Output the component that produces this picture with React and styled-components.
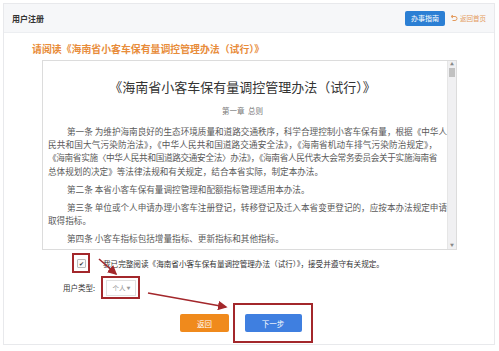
import React, { useState } from 'react'
import styled, { createGlobalStyle } from 'styled-components'

const GlobalStyle = createGlobalStyle`
  html, body {
    margin: 0;
    padding: 0;
    background: #fff;
    font-family: "Noto Sans CJK SC", "Noto Sans", sans-serif;
  }
`

const Panel = styled.div`
  position: relative;
  margin: 3px 0 0 3px;
  width: 490px;
  height: 340px;
  border: 1px solid #e8e9ec;
  box-sizing: content-box;
`

const Header = styled.div`
  height: 28px;
  background: #f6f7f9;
  border-bottom: 1px solid #eceef1;
  display: flex;
  align-items: center;
  justify-content: space-between;
  padding: 0 8px 0 8px;
`

const HeaderTitle = styled.div`
  font-size: 8px;
  font-weight: 700;
  color: #333;
`

const HeaderActions = styled.div`
  display: flex;
  align-items: center;
  gap: 5px;
`

const GuideButton = styled.div`
  width: 40px;
  height: 15px;
  background: #2b7fd4;
  border-radius: 2px;
  color: #fff;
  font-size: 7px;
  display: flex;
  align-items: center;
  justify-content: center;
`

const HomeLink = styled.div`
  display: flex;
  align-items: center;
  gap: 2px;
  color: #e49a5c;
  font-size: 6.5px;
`

const NoticeTitle = styled.div`
  margin: 9px 0 0 28px;
  height: 14px;
  line-height: 14px;
  font-size: 9.9px;
  font-weight: 700;
  color: #e88c3a;
`

const DocBox = styled.div`
  margin: 4px 0 0 38px;
  width: 413px;
  height: 188px;
  border: 1px solid #dcdcdc;
  display: flex;
  overflow: hidden;
`

const DocContent = styled.div`
  flex: 1;
  min-width: 0;
  padding: 0 10px 0 5px;
  color: #5a5a5a;
  overflow: hidden;
`

const DocTitle = styled.div`
  margin-top: 17px;
  text-align: center;
  font-size: 13px;
  line-height: 18px;
  color: #333;
`

const Chapter = styled.div`
  margin-top: 9px;
  text-align: center;
  font-size: 7.5px;
  line-height: 12px;
  color: #777;
`

const Para = styled.div`
  margin-top: ${p => (p.$first ? '8px' : '5px')};
`

const Line = styled.div`
  font-size: 8.6px;
  line-height: 13.2px;
  white-space: nowrap;
  text-align: ${p => (p.$last ? 'left' : 'justify')};
  text-align-last: ${p => (p.$last ? 'left' : 'justify')};
  padding-left: ${p => (p.$indent ? '19px' : '0')};
  letter-spacing: ${p => p.$ls || 0}px;
`

const ScrollTrack = styled.div`
  width: 8px;
  background: #f0f0f2;
  border-left: 1px solid #e6e6e6;
  display: flex;
  flex-direction: column;
  align-items: center;
`

const ScrollArrow = styled.div`
  height: 7px;
  font-size: 4px;
  line-height: 7px;
  color: #888;
`

const ScrollThumb = styled.div`
  width: 6px;
  height: 9px;
  background: #c1c1c1;
`

const ScrollFill = styled.div`
  flex: 1;
`

const Row = styled.div`
  display: flex;
  align-items: center;
  margin: ${p => p.$mt || 3}px 0 0 ${p => p.$ml || 0}px;
`

const Highlight = styled.div`
  border: 2px solid #a3272b;
  box-sizing: border-box;
  display: flex;
  align-items: center;
  justify-content: center;
  width: ${p => p.$w}px;
  height: ${p => p.$h}px;
`

const CheckBox = styled.div`
  width: 7px;
  height: 7px;
  border: 1px solid #bbb;
  border-radius: 1px;
  background: #fafafa;
  display: flex;
  align-items: center;
  justify-content: center;
  font-size: 6px;
  line-height: 7px;
  color: #333;
`

const AgreeText = styled.div`
  margin-left: 13px;
  font-size: 7.6px;
  color: #333;
`

const TypeLabel = styled.div`
  font-size: 7.5px;
  color: #333;
  width: 38px;
`

const SelectBox = styled.div`
  width: 30px;
  height: 16px;
  border: 1px solid #e0e0e0;
  display: flex;
  align-items: center;
  justify-content: space-between;
  padding: 0 4px 0 6px;
  box-sizing: border-box;
  font-size: 6.5px;
  color: #999;
`

const Caret = styled.span`
  font-size: 4px;
`

const ActionButton = styled.div`
  width: ${p => p.$w}px;
  height: 18px;
  border-radius: 2px;
  background: ${p => p.$bg};
  color: #fff;
  font-size: 7.5px;
  display: flex;
  align-items: center;
  justify-content: center;
`

const NextFrame = styled(Highlight)`
  margin-left: 4px;
`

const Arrows = styled.svg`
  position: absolute;
  left: -4px;
  top: -4px;
  pointer-events: none;
`

const paragraphs = [
  [
    '第一条 为维护海南良好的生态环境质量和道路交通秩序，科学合理控制小客车保有量，根据《中华人',
    '民共和国大气污染防治法》，《中华人民共和国道路交通安全法》，《海南省机动车排气污染防治规定》，',
    '《海南省实施〈中华人民共和国道路交通安全法〉办法》，《海南省人民代表大会常务委员会关于实施海南省',
    '总体规划的决定》等法律法规和有关规定，结合本省实际，制定本办法。',
  ],
  ['第二条 本省小客车保有量调控管理和配额指标管理适用本办法。'],
  [
    '第三条 单位或个人申请办理小客车注册登记，转移登记及迁入本省变更登记的，应按本办法规定申请',
    '取得指标。',
  ],
  ['第四条 小客车指标包括增量指标、更新指标和其他指标。'],
]

function ReturnIcon() {
  return (
    <svg width="8" height="7" viewBox="0 0 8 7">
      <path d="M1.5 1.5 H5 A2 2 0 0 1 5 5.5 H2.5" fill="none" stroke="#e49a5c" strokeWidth="1" />
      <path d="M3 0 L1 1.5 L3 3" fill="none" stroke="#e49a5c" strokeWidth="1" />
    </svg>
  )
}

export default function App() {
  const [type] = useState('个人')

  return (
    <>
      <GlobalStyle />
      <Panel>
        <Header>
          <HeaderTitle>用户注册</HeaderTitle>
          <HeaderActions>
            <GuideButton>办事指南</GuideButton>
            <HomeLink>
              <ReturnIcon />
              返回首页
            </HomeLink>
          </HeaderActions>
        </Header>

        <NoticeTitle>请阅读《海南省小客车保有量调控管理办法（试行）》</NoticeTitle>

        <DocBox>
          <DocContent>
            <DocTitle>《海南省小客车保有量调控管理办法（试行）》</DocTitle>
            <Chapter>第一章&nbsp;&nbsp;总则</Chapter>
            {paragraphs.map((lines, i) => (
              <Para key={i} $first={i === 0}>
                {lines.map((text, j) => (
                  <Line
                    key={j}
                    $indent={j === 0}
                    $last={j === lines.length - 1}
                    $ls={i === 0 && j === 2 ? -0.35 : 0}
                  >
                    {text}
                  </Line>
                ))}
              </Para>
            ))}
          </DocContent>
          <ScrollTrack>
            <ScrollArrow>▲</ScrollArrow>
            <ScrollThumb />
            <ScrollFill />
            <ScrollArrow>▼</ScrollArrow>
          </ScrollTrack>
        </DocBox>

        <Row $mt={3} $ml={68}>
          <Highlight $w={18} $h={20}>
            <CheckBox>✔</CheckBox>
          </Highlight>
          <AgreeText>我已完整阅读《海南省小客车保有量调控管理办法（试行）》，接受并遵守有关规定。</AgreeText>
        </Row>

        <Row $mt={3} $ml={59}>
          <TypeLabel>用户类型:</TypeLabel>
          <Highlight $w={39} $h={23}>
            <SelectBox>
              <span>{type}</span>
              <Caret>▼</Caret>
            </SelectBox>
          </Highlight>
        </Row>

        <Row $mt={4} $ml={176}>
          <ActionButton $w={49} $bg="#f08a1c">返回</ActionButton>
          <NextFrame $w={80} $h={40}>
            <ActionButton $w={57} $bg="#3f7fe0">下一步</ActionButton>
          </NextFrame>
        </Row>

        <Arrows width="499" height="351" viewBox="0 0 499 351">
          <defs>
            <marker id="head" markerWidth="6" markerHeight="6" refX="5" refY="3" orient="auto" markerUnits="strokeWidth">
              <path d="M0 0 L6 3 L0 6 Z" fill="#a3272b" />
            </marker>
          </defs>
          <line x1="99" y1="259" x2="116" y2="274" stroke="#a3272b" strokeWidth="1.6" markerEnd="url(#head)" />
          <line x1="148" y1="293" x2="226" y2="307" stroke="#a3272b" strokeWidth="1.6" markerEnd="url(#head)" />
        </Arrows>
      </Panel>
    </>
  )
}
